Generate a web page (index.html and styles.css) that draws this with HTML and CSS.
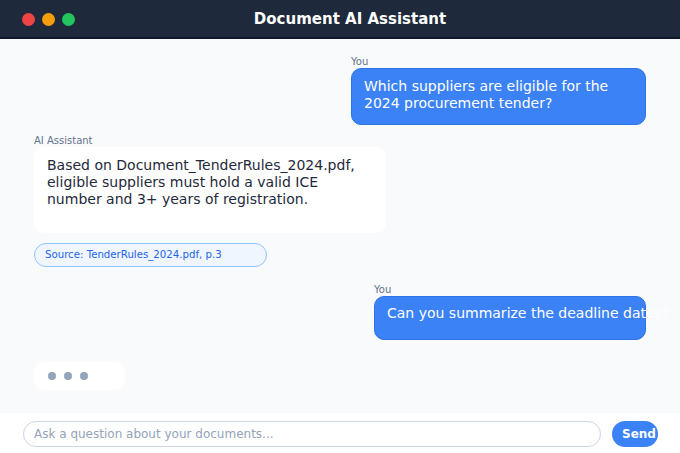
FILE: index.html
```html
<!DOCTYPE html>
<html>
<head>
<meta charset="utf-8">
<link rel="stylesheet" href="styles.css">
</head>
<body>
<div class="app">
  <header class="titlebar">
    <div class="dots">
      <span class="dot red"></span>
      <span class="dot amber"></span>
      <span class="dot green"></span>
    </div>
    <div class="title">Document AI Assistant</div>
  </header>
  <main class="chat">
    <div class="msg user first">
      <div class="label">You</div>
      <div class="bubble user-bubble b1">Which suppliers are eligible for the<br>2024 procurement tender?</div>
    </div>
    <div class="msg ai">
      <div class="label">AI Assistant</div>
      <div class="bubble ai-bubble">Based on Document_TenderRules_2024.pdf,<br>eligible suppliers must hold a valid ICE<br>number and 3+ years of registration.</div>
      <div class="source">Source: TenderRules_2024.pdf, p.3</div>
    </div>
    <div class="msg user second">
      <div class="label">You</div>
      <div class="bubble user-bubble b2">Can you summarize the deadline dates?</div>
    </div>
    <div class="typing">
      <span></span><span></span><span></span>
    </div>
  </main>
  <footer class="composer">
    <div class="input">Ask a question about your documents...</div>
    <button class="send">Send</button>
  </footer>
</div>
</body>
</html>
```

FILE: styles.css
```css
* { box-sizing: border-box; }
html, body { margin: 0; padding: 0; }
body {
  width: 680px;
  height: 453px;
  overflow: hidden;
  font-family: "DejaVu Sans", sans-serif;
  background: #f8fafc;
}
.app {
  display: flex;
  flex-direction: column;
  height: 453px;
}
.titlebar {
  position: relative;
  height: 39px;
  background: #1e293b;
  border-bottom: 2px solid #0f172a;
  display: flex;
  align-items: center;
  justify-content: center;
}
.dots {
  position: absolute;
  left: 22px;
  top: 13px;
  display: flex;
  gap: 7px;
}
.dot {
  width: 13px;
  height: 13px;
  border-radius: 50%;
  display: block;
}
.red { background: #ef4444; }
.amber { background: #f59e0b; }
.green { background: #22c55e; }
.title {
  color: #ffffff;
  font-weight: bold;
  font-size: 15px;
  margin-left: 20px;
  margin-top: 1px;
}
.chat {
  flex: 1;
  background: #f8fafc;
  padding: 17px 34px 0 34px;
  display: flex;
  flex-direction: column;
  overflow: hidden;
}
.msg { display: flex; flex-direction: column; }
.msg.user { align-items: flex-start; align-self: flex-end; }
.msg.ai { align-items: flex-start; margin-top: 10px; }
.msg.second { margin-top: 17px; }
.label {
  font-size: 10px;
  line-height: 12px;
  color: #64748b;
  margin-bottom: 0;
}
.bubble {
  font-size: 14px;
  line-height: 17px;
  border-radius: 10px;
}
.user-bubble {
  background: #3b82f6;
  color: #ffffff;
  border: 1px solid #2f74e6;
}
.b1 {
  width: 295px;
  padding: 9px 12px 12px 12px;
}
.b2 {
  width: 272px;
  white-space: nowrap;
  padding: 8px 12px 18px 12px;
  height: 44px;
}
.ai-bubble {
  background: #ffffff;
  color: #1e293b;
  width: 352px;
  padding: 10px 13px 25px 13px;
}
.source {
  margin-top: 10px;
  height: 24px;
  width: 233px;
  border-radius: 12px;
  border: 1px solid #93c5fd;
  background: #eff6ff;
  color: #2563eb;
  font-size: 10.2px;
  line-height: 22px;
  padding-left: 10px;
}
.typing {
  margin-top: 22px;
  width: 91px;
  height: 28px;
  background: #ffffff;
  border-radius: 10px;
  display: flex;
  align-items: center;
  gap: 8px;
  padding-left: 14px;
}
.typing span {
  width: 8px;
  height: 8px;
  border-radius: 50%;
  background: #94a3b8;
  display: block;
}
.composer {
  height: 40px;
  background: #ffffff;
  display: flex;
  align-items: flex-start;
  padding: 8px 22px 0 23px;
  gap: 11px;
}
.input {
  flex: 1;
  height: 26px;
  border: 1px solid #cbd5e1;
  border-radius: 13px;
  font-size: 12px;
  line-height: 24px;
  color: #94a3b8;
  padding-left: 10px;
}
.send {
  width: 46px;
  height: 26px;
  border: none;
  border-radius: 13px;
  background: #3b82f6;
  color: #ffffff;
  font-family: "DejaVu Sans", sans-serif;
  font-weight: bold;
  font-size: 12px;
  padding: 0 0 0 10px;
  text-align: left;
  overflow: hidden;
  white-space: nowrap;
}
```
